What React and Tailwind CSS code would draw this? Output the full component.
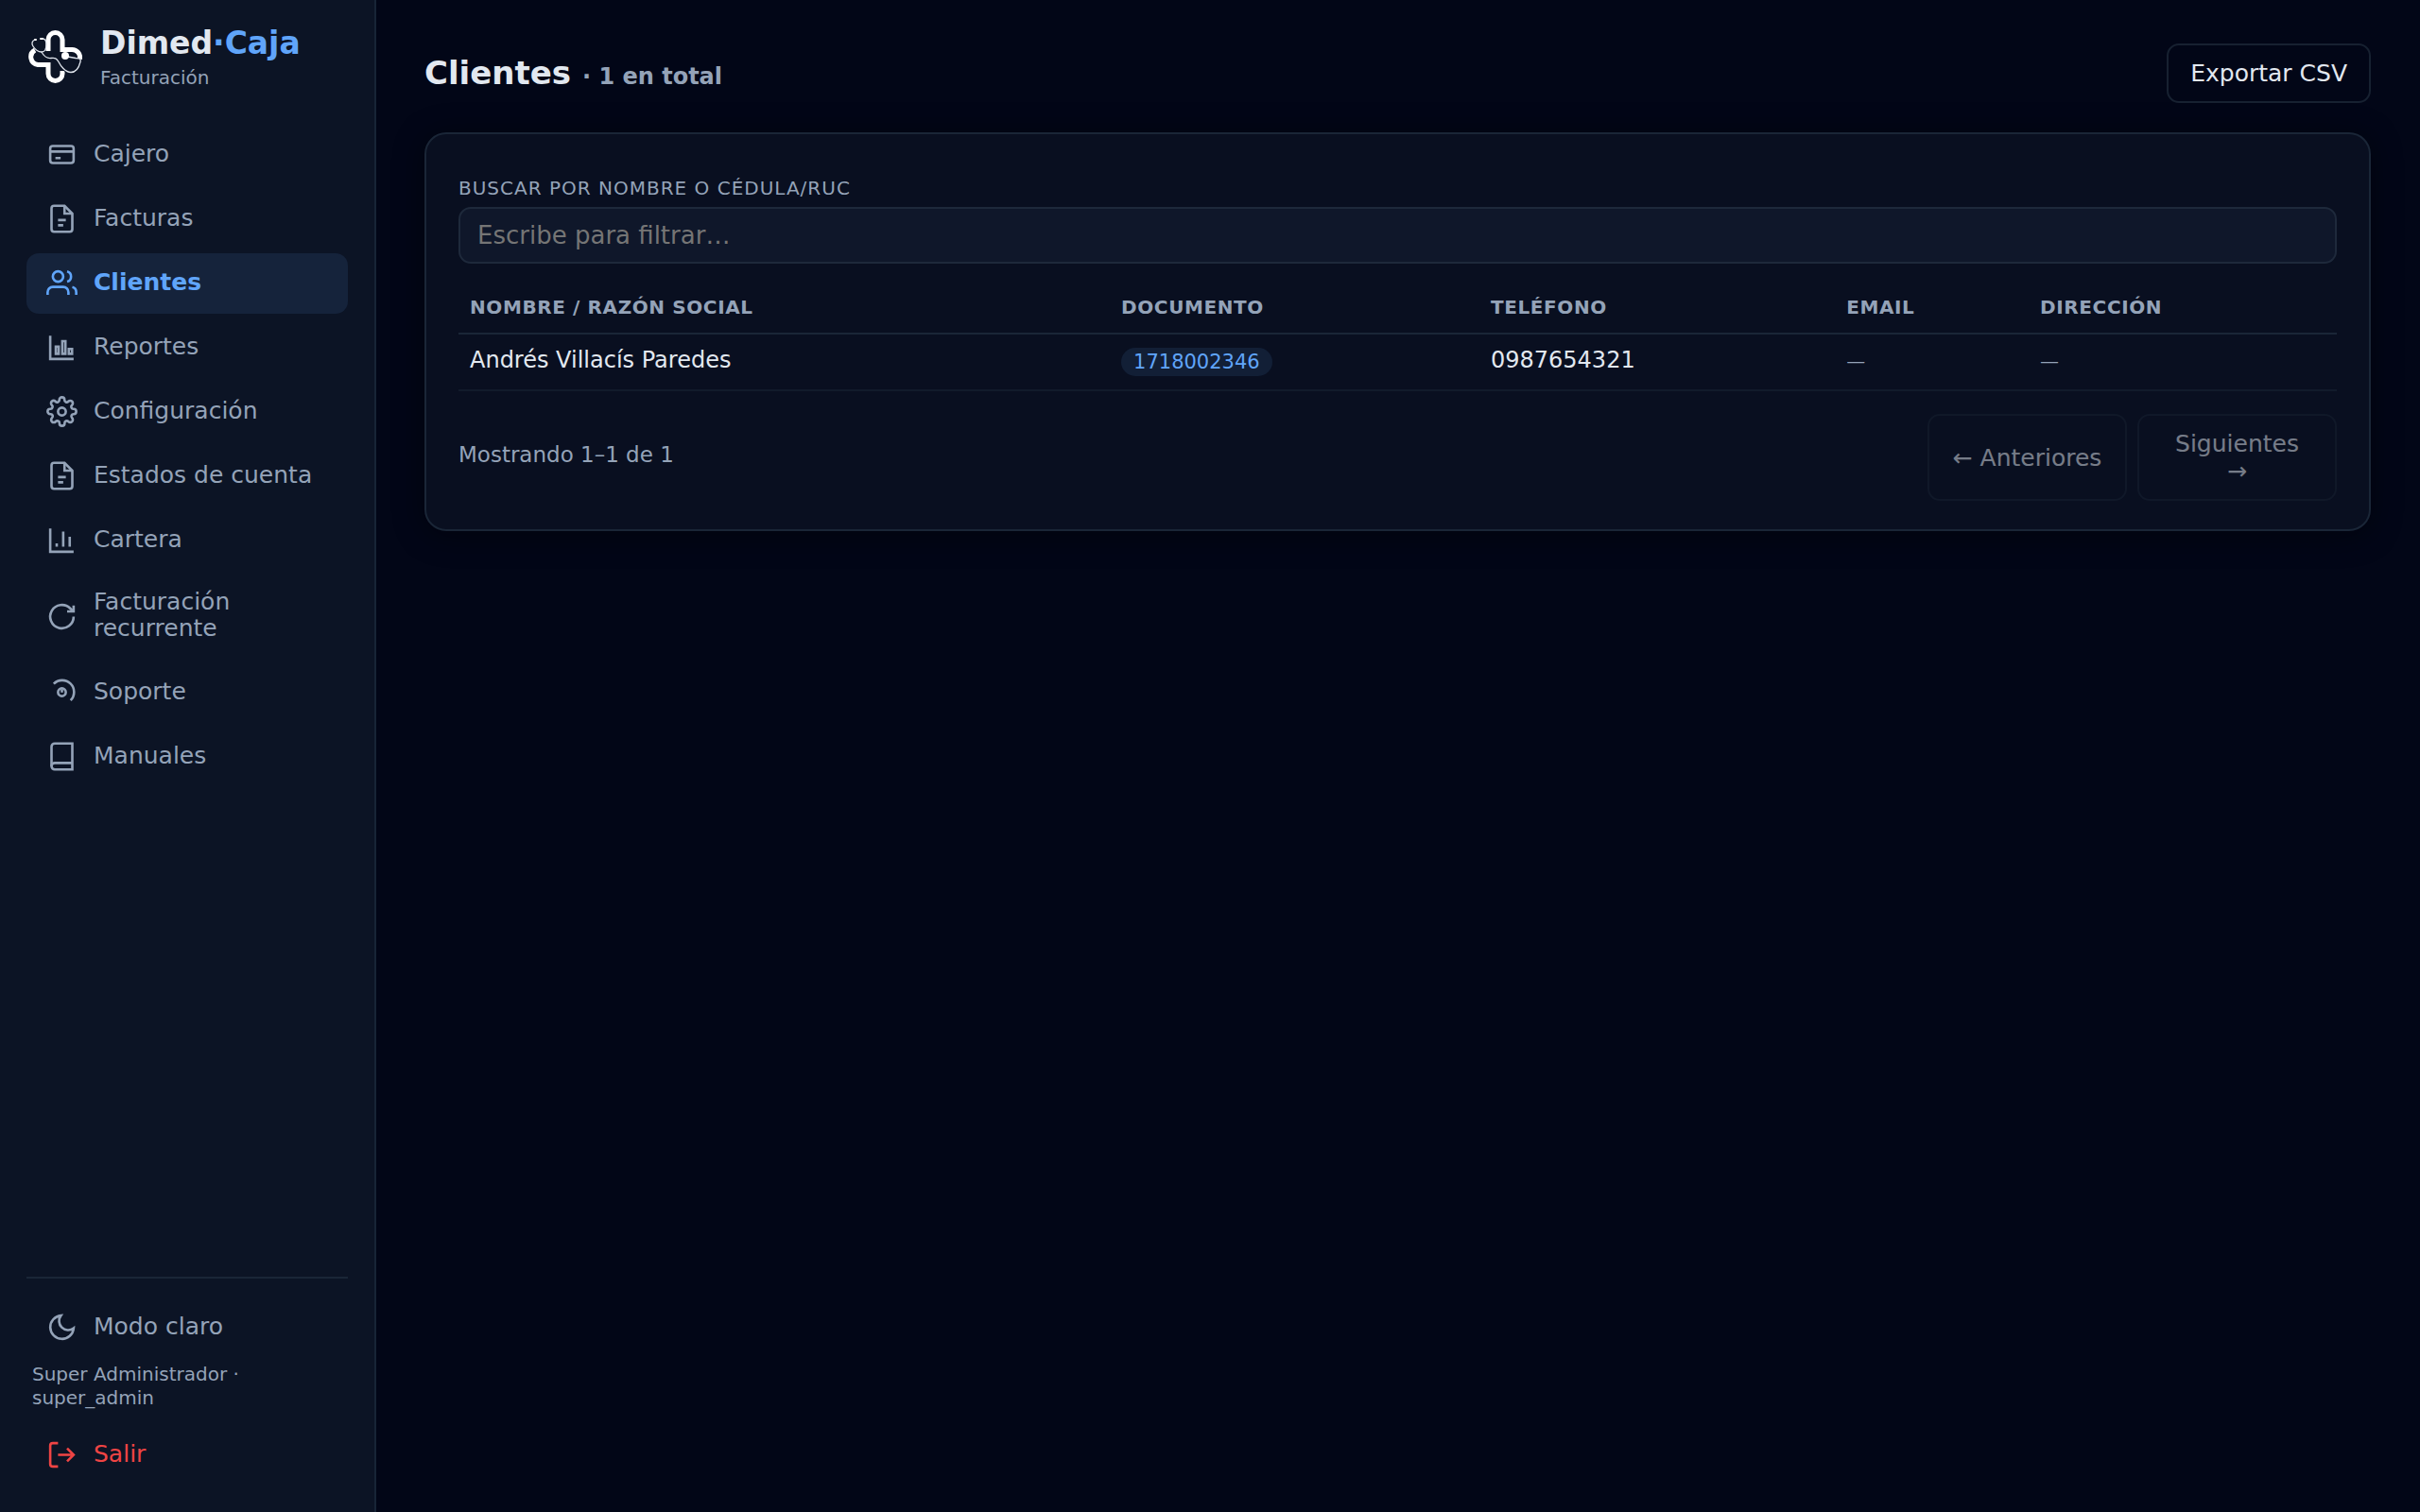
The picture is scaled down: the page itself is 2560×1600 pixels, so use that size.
import { useState } from 'react';

const navItems = [
  ['Cajero', 'card'],
  ['Facturas', 'file'],
  ['Clientes', 'users'],
  ['Reportes', 'report'],
  ['Configuración', 'gear'],
  ['Estados de cuenta', 'file'],
  ['Cartera', 'chart'],
  ['Facturación recurrente', 'refresh'],
  ['Soporte', 'support'],
  ['Manuales', 'book'],
];

const clientes = [
  { nombre: 'Andrés Villacís Paredes', documento: '1718002346', telefono: '0987654321', email: '', direccion: '' },
];

const icons = {
  card: (
    <>
      <rect x="3" y="5.5" width="18" height="13" rx="2" />
      <path d="M3 9.7h18M7 14.7h4" />
    </>
  ),
  file: (
    <>
      <path d="M14 2H6a2 2 0 0 0-2 2v16a2 2 0 0 0 2 2h12a2 2 0 0 0 2-2V8z" />
      <path d="M14 2v6h6M9 13h6M9 17h4" />
    </>
  ),
  users: (
    <>
      <path d="M17 21v-2a4 4 0 0 0-4-4H5a4 4 0 0 0-4 4v2" />
      <circle cx="9" cy="7" r="4" />
      <path d="M23 21v-2a4 4 0 0 0-3-3.87M16 3.13a4 4 0 0 1 0 7.75" />
    </>
  ),
  report: (
    <>
      <path d="M3 3v18h18" />
      <path d="M7.3 11.5h2.2V17H7.3zM12.3 7.3h2.4V17h-2.4zM17.3 13.3h2.5V17h-2.5z" />
    </>
  ),
  gear: (
    <>
      <circle cx="12" cy="12" r="3" />
      <path d="M19.4 15a1.65 1.65 0 0 0 .33 1.82l.06.06a2 2 0 1 1-2.83 2.83l-.06-.06a1.65 1.65 0 0 0-2.8 1.17V21a2 2 0 0 1-4 0v-.09a1.65 1.65 0 0 0-2.9-1.17l-.06.06a2 2 0 1 1-2.83-2.83l.06-.06A1.65 1.65 0 0 0 3.09 14H3a2 2 0 0 1 0-4h.09a1.65 1.65 0 0 0 1.17-2.9l-.06-.06a2 2 0 1 1 2.83-2.83l.06.06A1.65 1.65 0 0 0 10 3.09V3a2 2 0 0 1 4 0v.09a1.65 1.65 0 0 0 2.9 1.17l.06-.06a2 2 0 1 1 2.83 2.83l-.06.06A1.65 1.65 0 0 0 20.91 10H21a2 2 0 0 1 0 4h-.09a1.65 1.65 0 0 0-1.51 1z" />
    </>
  ),
  chart: <path d="M3 3v18h18M8 14.5V17M13 5.5V17M18 9.5V17" />,
  refresh: (
    <>
      <path d="M21 12a9 9 0 1 1-2.64-6.36L21 8" />
      <path d="M21 3.5V8h-5" />
    </>
  ),
  support: (
    <>
      <path d="M5.7 5.5a9 9 0 0 1 13 12.8" />
      <circle cx="12" cy="12" r="3" />
      <path d="M12 10v2.2" />
    </>
  ),
  book: (
    <>
      <path d="M4 19.5A2.5 2.5 0 0 1 6.5 17H20" />
      <path d="M6.5 2H20v20H6.5A2.5 2.5 0 0 1 4 19.5v-15A2.5 2.5 0 0 1 6.5 2z" />
    </>
  ),
  moon: <path d="M21 12.79A9 9 0 1 1 11.21 3 7 7 0 0 0 21 12.79z" />,
  logout: <path d="M9 21H5a2 2 0 0 1-2-2V5a2 2 0 0 1 2-2h4M16 7l5 5-5 5M9 12h12" />,
};

function Icon({ name }) {
  return (
    <svg
      className="size-[33px] shrink-0"
      viewBox="0 0 24 24"
      fill="none"
      stroke="currentColor"
      strokeWidth="1.9"
      aria-hidden="true"
    >
      {icons[name]}
    </svg>
  );
}

function Logo() {
  return (
    <svg className="size-[58px] shrink-0" viewBox="0 0 58 58" fill="none" aria-hidden="true">
      <g stroke="#fff" strokeWidth="5">
        <path d="M22 23V11a7.5 7.5 0 0 1 15 0v10.500h10a8.500 8.500 0 0 1 8.500 10" />
        <path d="M8 22a8.300 8.300 0 0 0 3 15.500h11V47a7.500 7.500 0 0 0 15 0v-3" />
      </g>
      <g stroke="#0c1425" strokeWidth="3">
        <path d="M15 24c3 5 6 7 10 6.500s6 0 8 4 7 11 13 11 9-7 10-12" />
      </g>
      <g stroke="#dfe4ec" strokeWidth="1.300" strokeLinecap="round">
        <path d="M8 11c-3 1-4 4-2 7s5 6 9 6 5-4 5-8-1-6-4-6" />
        <path d="M15 24c2 4 6 7 10 6.500s6 0 8 4 7 11 13 11 9-7 10-11-2-4-5-4l-11-2" />
      </g>
      <path d="M8 11h1M14 10h2" stroke="#fff" strokeWidth="2" strokeLinecap="round" />
      <circle cx="40" cy="28" r="4" fill="#fff" />
    </svg>
  );
}

function NavLink({ label, icon, active, onClick }) {
  return (
    <a
      href="#"
      onClick={onClick}
      aria-current={active ? 'page' : undefined}
      className={`flex items-center gap-[17px] rounded-[13px] px-[21px] pt-[15px] pb-4 text-[25px] leading-7 ${
        active ? 'bg-[#15233b] font-semibold text-[#60a5fa]' : 'text-[#94a3b8] hover:bg-[#15233b]'
      }`}
    >
      <Icon name={icon} />
      <span className="pb-0.5">{label}</span>
    </a>
  );
}

function Sidebar() {
  const [current, setCurrent] = useState('Clientes');

  return (
    <aside className="sticky top-0 flex h-screen w-[398px] shrink-0 flex-col border-r-2 border-[#172436] bg-[#0c1425] px-7 pb-7">
      <div className="flex items-center gap-[19px] px-px pt-[26px]">
        <Logo />
        <div>
          <div className="text-[33px] leading-10 font-bold text-[#e2e8f0]">
            Dimed<span className="text-[#60a5fa]">·Caja</span>
          </div>
          <div className="pt-1 text-[20px] leading-6 text-[#94a3b8]">Facturación</div>
        </div>
      </div>

      <nav className="mt-[38px] flex flex-1 flex-col gap-1">
        {navItems.map(([label, icon]) => (
          <NavLink key={label} label={label} icon={icon} active={label === current} onClick={() => setCurrent(label)} />
        ))}
      </nav>

      <div className="border-t-2 border-[#1a2637] pt-5">
        <button type="button" className="flex w-full items-center gap-[17px] px-[21px] pt-[15px] pb-4 text-[25px] leading-7 text-[#94a3b8]">
          <Icon name="moon" />
          <span className="pb-0.5">Modo claro</span>
        </button>
        <div className="px-1.5 pt-[5px] pb-4 text-[20px] leading-[25px] text-[#94a3b8]">
          Super Administrador · super_admin
        </div>
        <button type="button" className="flex w-full items-center gap-[17px] px-[21px] pt-[15px] pb-4 text-[25px] leading-7 text-[#ef4444]">
          <Icon name="logout" />
          <span className="pb-0.5">Salir</span>
        </button>
      </div>
    </aside>
  );
}

function Button({ className = '', children, ...props }) {
  return (
    <button
      type="button"
      className={`rounded-[13px] border-2 border-[#172131] py-[15px] text-[25px] leading-[29px] text-[#e2e8f0] disabled:opacity-50 ${className}`}
      {...props}
    >
      {children}
    </button>
  );
}

function Th({ children }) {
  return <th className="px-3 pt-4 pb-[15px] text-left text-[20px] leading-6 font-bold tracking-[0.03em]">{children}</th>;
}

function Vacio() {
  return <span className="text-[20px] text-[#94a3b8]">—</span>;
}

export default function App() {
  const [query, setQuery] = useState('');
  const q = query.toLowerCase();
  const rows = clientes.filter((c) => c.nombre.toLowerCase().includes(q) || c.documento.includes(q));

  return (
    <div className="flex min-h-screen bg-[#020617] font-['DejaVu_Sans',sans-serif] text-[#e2e8f0]">
      <Sidebar />
      <main className="min-w-0 flex-1 pt-[46px] pr-[52px] pb-12 pl-[51px]">
        <header className="mb-[31px] flex items-center justify-between">
          <h1 className="pt-0.5 text-[34px] leading-10 font-bold">
            Clientes <span className="text-[24px] text-[#94a3b8]">· 1 en total</span>
          </h1>
          <Button className="px-[23px]">Exportar CSV</Button>
        </header>

        <section className="rounded-[23px] border-2 border-[#1a2637] bg-[#090f20] px-[34px] pt-[45px] pb-[30px] shadow-[0_4px_33px_rgba(0,0,0,0.45)]">
          <label htmlFor="buscar" className="block text-[20px] leading-6 tracking-wider text-[#94a3b8] uppercase">
            Buscar por nombre o cédula/RUC
          </label>
          <input
            id="buscar"
            type="text"
            value={query}
            onChange={(e) => setQuery(e.target.value)}
            placeholder="Escribe para filtrar…"
            className="mt-2 block h-[60px] w-full rounded-[13px] border-2 border-[#1e293b] bg-[#0f172a] px-[18px] text-[26px] outline-none placeholder:text-[#757575]"
          />

          <table className="mt-[18px] w-full border-collapse text-[24px]">
            <thead>
              <tr className="border-b-2 border-[#1a2637] text-[#94a3b8] uppercase">
                <Th>Nombre / Razón social</Th>
                <Th>Documento</Th>
                <Th>Teléfono</Th>
                <Th>Email</Th>
                <Th>Dirección</Th>
              </tr>
            </thead>
            <tbody>
              {rows.map((c) => (
                <tr key={c.documento} className="h-[60px] border-b-2 border-[#111b2b]">
                  <td className="px-3 pb-1">{c.nombre}</td>
                  <td className="px-3 pb-0.5">
                    <span className="inline-block rounded-full bg-[#121f36] px-[13px] text-[21px] leading-[30px] text-[#60a5fa]">
                      {c.documento}
                    </span>
                  </td>
                  <td className="px-3 pb-1">{c.telefono}</td>
                  <td className="px-3 pb-1">{c.email || <Vacio />}</td>
                  <td className="px-3 pb-1">{c.direccion || <Vacio />}</td>
                </tr>
              ))}
            </tbody>
          </table>

          <div className="mt-6 flex items-center justify-between">
            <span className="pb-1.5 text-[23px] leading-7 text-[#94a3b8]">Mostrando 1–1 de 1</span>
            <div className="flex gap-[11px]">
              <Button disabled className="w-[211px] px-[23px]">← Anteriores</Button>
              <Button disabled className="w-[211px] px-[25px]">Siguientes →</Button>
            </div>
          </div>
        </section>
      </main>
    </div>
  );
}
